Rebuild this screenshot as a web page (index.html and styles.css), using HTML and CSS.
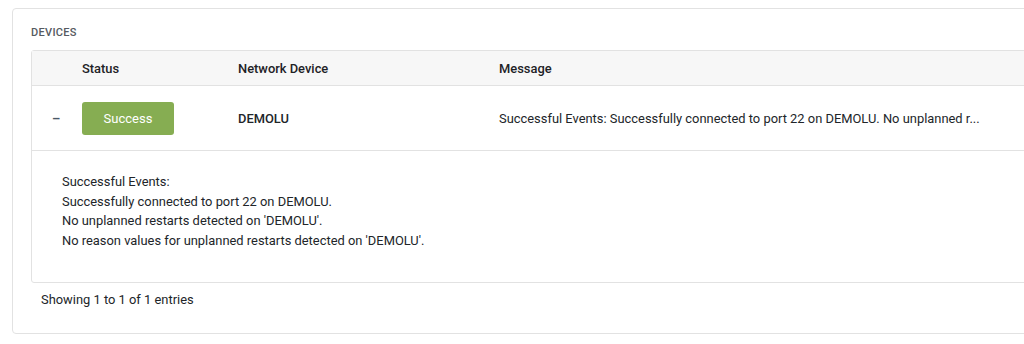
FILE: index.html
```html
<!DOCTYPE html>
<html lang="en">
	<head>
		<meta charset="UTF-8" />
		<meta name="viewport" content="width=device-width, initial-scale=1.0" />
		<title>Devices</title>
		<link rel="stylesheet" href="styles.css">
	</head>
	<body>
		<div class="panel">
			<div class="panel-title">DEVICES</div>
			<div class="table">
				<div class="row head">
					<span></span>
					<span>Status</span>
					<span>Network Device</span>
					<span>Message</span>
				</div>
				<div class="row item">
					<span class="toggle">&ndash;</span>
					<span><span class="status success">Success</span></span>
					<span class="device">DEMOLU</span>
					<span class="msg">Successful Events: Successfully connected to port 22 on DEMOLU. No unplanned r...</span>
				</div>
				<div class="detail">
					<div>Successful Events:</div>
					<div>Successfully connected to port 22 on DEMOLU.</div>
					<div>No unplanned restarts detected on 'DEMOLU'.</div>
					<div>No reason values for unplanned restarts detected on 'DEMOLU'.</div>
				</div>
			</div>
			<div class="info">Showing 1 to 1 of 1 entries</div>
		</div>
	</body>
</html>
```

FILE: styles.css
```css
html,
body {
	margin: 0;
	padding: 0;
	overflow: hidden;
	background: #ffffff;
}
body {
	padding: 8px 0 0 12px;
	font-family: Roboto, 'Liberation Sans', Arial, sans-serif;
	font-size: 12.9px;
	color: #212529;
}

.panel {
	width: 1100px;
	height: 326px;
	box-sizing: border-box;
	border: 1px solid #e2e2e2;
	border-radius: 4px;
	padding: 17px 0 0 18px;
}
.panel-title {
	font-size: 11px;
	line-height: 14px;
	font-weight: 500;
	letter-spacing: 0.3px;
	color: #555a60;
	margin-bottom: 10px;
}

.table {
	border: 1px solid #e2e2e2;
	border-radius: 3px;
}
.row {
	display: grid;
	grid-template-columns: 50px 156px 261px 1fr;
	align-items: center;
	border-bottom: 1px solid #e2e2e2;
}
.head {
	height: 34px;
	background: #f7f7f7;
	font-weight: 500;
	color: #1e2226;
}
.item {
	height: 64px;
}
.toggle {
	padding-left: 20px;
	font-weight: 700;
	color: #4a5866;
}
.status {
	display: inline-block;
	width: 92px;
	height: 33px;
	line-height: 33px;
	text-align: center;
	border-radius: 3px;
	font-size: 13px;
}
.success {
	background: #86ad52;
	color: #ffffff;
}
.device {
	font-weight: 500;
}
.msg {
	white-space: nowrap;
}

.detail {
	padding: 21px 30px 32px;
	line-height: 19.5px;
}

.info {
	padding: 9px 10px;
	line-height: 16px;
}
```
